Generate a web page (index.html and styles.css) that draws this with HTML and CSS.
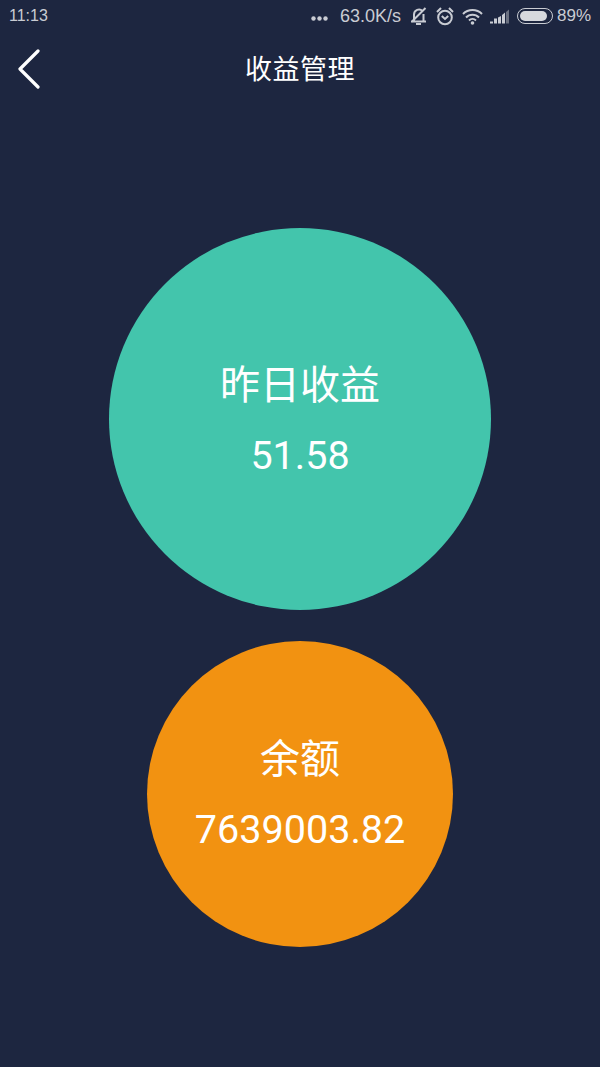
FILE: index.html
```html
<!DOCTYPE html>
<html lang="zh">
<head>
<meta charset="utf-8">
<title>收益管理</title>
<link rel="stylesheet" href="styles.css">
</head>
<body>
<div class="status">
  <span class="time">11:13</span>
  <div class="status-right">
    <svg class="dots" width="17" height="5" viewBox="0 0 17 5"><circle cx="2.5" cy="2.5" r="2.200"/><circle cx="8.5" cy="2.5" r="2.200"/><circle cx="14.500" cy="2.5" r="2.200"/></svg>
    <span class="speed">63.0K/s</span>
    <svg class="ic-mute" width="19" height="20" viewBox="0 0 19 20"><path d="M5 14.500V8.500a5 5 0 0 1 8.500-3.500M14.500 8v6.500M2 15.500h15M7 18h5M2.500 16L16.500 2"/></svg>
    <svg class="ic-alarm" width="18" height="20" viewBox="0 0 18 20"><circle cx="9" cy="11.500" r="6.800"/><path d="M5.800 10l3.200 3 3.200-3M1 6l4-4M17 6l-4-4"/></svg>
    <svg class="ic-wifi" width="21" height="17" viewBox="0 0 21 17"><path d="M1 6a13.500 13.500 0 0 1 19 0M4 9.500a9 9 0 0 1 13 0M7 12.500a5 5 0 0 1 7 0"/><circle cx="10.500" cy="15" r="1.800"/></svg>
    <svg class="ic-signal" width="19" height="15" viewBox="0 0 19 15"><path class="on" d="M0 14.500h3v-2H0zM4 14.500h3v-5H4zM8 14.500h3V7l-3 1.500zM12 14.500h3V3.500L12 6z"/><path class="off" d="M16 14.500h3V.5l-3 2.500z"/></svg>
    <div class="battery"><div class="battery-fill"></div></div>
    <span class="percent">89%</span>
  </div>
</div>
<header class="nav">
  <svg class="back" width="26" height="40" viewBox="0 0 26 40"><path d="M22 2L4 20l18 18"/></svg>
  <h1 class="title">收益管理</h1>
</header>
<main class="main">
  <div class="circle circle-green">
    <div class="label-large">昨日收益</div>
    <div class="value-large">51.58</div>
  </div>
  <div class="circle circle-orange">
    <div class="label-small">余额</div>
    <div class="value-small">7639003.82</div>
  </div>
</main>
</body>
</html>
```
FILE: styles.css
```css
* { box-sizing: border-box; }
html, body { margin: 0; padding: 0; }
body {
  width: 600px;
  height: 1067px;
  overflow: hidden;
  background: #1d2640;
  color: #fff;
  font-family: Roboto, "Noto Sans CJK SC", sans-serif;
}
.status {
  height: 32px;
  display: flex;
  align-items: center;
  justify-content: space-between;
  padding: 0 9px;
  color: #c9ccd3;
  font-family: "Liberation Sans", sans-serif;
  font-size: 17px;
}
.time { font-size: 16px; }
.status-right { display: flex; align-items: center; }
.status svg { display: block; }
.dots { fill: #c9ccd3; margin-right: 12px; margin-top: 4px; }
.speed { font-size: 18px; margin-right: 8px; }
.ic-mute, .ic-alarm, .ic-wifi { fill: none; stroke: #c9ccd3; stroke-width: 2; }
.ic-mute { margin-right: 8px; }
.ic-alarm { margin-right: 8px; }
.ic-wifi { margin-right: 7px; }
.ic-wifi circle { fill: #c9ccd3; stroke: none; }
.ic-signal { margin-right: 8px; }
.ic-signal .on { fill: #c9ccd3; }
.ic-signal .off { fill: #6a7080; }
.battery {
  width: 36px;
  height: 16px;
  border: 1.500px solid #c9ccd3;
  border-radius: 8px;
  padding: 2px;
  margin-right: 4px;
}
.battery-fill { width: 90%; height: 100%; background: #d6d8dd; border-radius: 5px; }
.percent { font-size: 17px; }
.nav {
  height: 74px;
  position: relative;
  display: flex;
  align-items: center;
  justify-content: center;
  padding-top: 2px;
}
.back {
  position: absolute;
  left: 16px;
  top: 17px;
  fill: none;
  stroke: #fff;
  stroke-width: 3.200;
  stroke-linecap: round;
  stroke-linejoin: round;
}
.title { margin: 0; font-size: 27px; font-weight: 400; line-height: 1; letter-spacing: 0.500px; }
.main {
  display: flex;
  flex-direction: column;
  align-items: center;
  padding-top: 122px;
  gap: 31px;
}
.circle {
  border-radius: 50%;
  display: flex;
  flex-direction: column;
  align-items: center;
  justify-content: center;
}
.circle-green { width: 382px; height: 382px; background: #43c5ac; gap: 26px; padding-top: 4px; }
.circle-orange { width: 306px; height: 306px; background: #f29211; gap: 26px; padding-top: 2px; }
.label-large { font-size: 40px; line-height: 44px; }
.value-large { font-size: 39.500px; line-height: 44px; }
.label-small { font-size: 40px; line-height: 44px; }
.value-small { font-size: 39.600px; line-height: 44px; }
```
